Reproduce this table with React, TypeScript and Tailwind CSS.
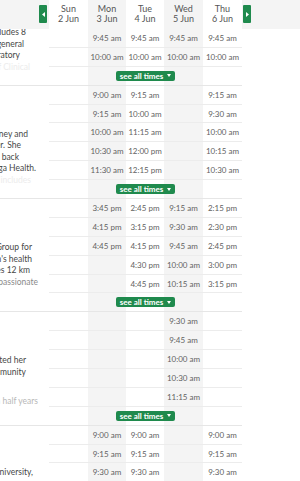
import React from "react";

type Day = { name: string; date: string; width: string; shade: boolean };

const DAYS: Day[] = [
  { name: "Sun", date: "2 Jun", width: "w-[39px]", shade: false },
  { name: "Mon", date: "3 Jun", width: "w-[38px]", shade: true },
  { name: "Tue", date: "4 Jun", width: "w-[38px]", shade: false },
  { name: "Wed", date: "5 Jun", width: "w-[39px]", shade: true },
  { name: "Thu", date: "6 Jun", width: "w-[39px]", shade: false },
];

interface BioLine {
  text: string;
  pad: string;
  tone?: string;
  gap?: string;
}

interface Section {
  id: string;
  top: string;
  bio: BioLine[];
  rows: string[][];
}

const SECTIONS: Section[] = [
  {
    id: "s1",
    top: "-mt-[2px]",
    bio: [
      { text: "includes 8", pad: "pr-[23px]" },
      { text: "general", pad: "pr-[25px]" },
      { text: "laboratory", pad: "pr-[29px]" },
      { text: "of Clinical", pad: "pr-[19px]", tone: "text-[#ececec]" },
    ],
    rows: [
      ["", "9:45 am", "9:45 am", "9:45 am", "9:45 am"],
      ["", "10:00 am", "10:00 am", "10:00 am", "10:00 am"],
    ],
  },
  {
    id: "s2",
    top: "pt-[43px]",
    bio: [
      { text: "Sydney and", pad: "pr-[21px]" },
      { text: "practitioner. She", pad: "pr-[28px]" },
      { text: "travel back", pad: "pr-[30px]" },
      { text: "Omega Health.", pad: "pr-[13px]" },
      { text: "and includes", pad: "pr-[18px]", tone: "text-[#ececec]" },
    ],
    rows: [
      ["", "9:00 am", "9:15 am", "", "9:15 am"],
      ["", "9:15 am", "10:00 am", "", "9:30 am"],
      ["", "10:00 am", "11:15 am", "", "10:00 am"],
      ["", "10:30 am", "12:00 pm", "", "10:15 am"],
      ["", "11:30 am", "12:15 pm", "", "10:30 am"],
    ],
  },
  {
    id: "s3",
    top: "pt-[43px]",
    bio: [
      { text: "Group for", pad: "pr-[17px]" },
      { text: "women's health", pad: "pr-[17px]" },
      { text: "completes 12 km", pad: "pr-[19px]" },
      { text: "is passionate", pad: "pr-[11px]", tone: "text-[#8a8a8a]" },
    ],
    rows: [
      ["", "3:45 pm", "2:45 pm", "9:15 am", "2:15 pm"],
      ["", "4:15 pm", "3:15 pm", "9:30 am", "2:30 pm"],
      ["", "4:45 pm", "4:15 pm", "9:45 am", "2:45 pm"],
      ["", "", "4:30 pm", "10:00 am", "3:00 pm"],
      ["", "", "4:45 pm", "10:15 am", "3:15 pm"],
    ],
  },
  {
    id: "s4",
    top: "pt-[43px]",
    bio: [
      { text: "completed her", pad: "pr-[23px]" },
      { text: "community", pad: "pr-[23px]" },
      { text: "and a half years", pad: "pr-[11px]", tone: "text-[#b8b8b8]", gap: "mt-[17.5px]" },
    ],
    rows: [
      ["", "", "", "9:30 am", ""],
      ["", "", "", "9:45 am", ""],
      ["", "", "", "10:00 am", ""],
      ["", "", "", "10:30 am", ""],
      ["", "", "", "11:15 am", ""],
    ],
  },
  {
    id: "s5",
    top: "pt-[41px]",
    bio: [{ text: "University,", pad: "pr-[16px]" }],
    rows: [
      ["", "9:00 am", "9:00 am", "", "9:00 am"],
      ["", "9:15 am", "9:15 am", "", "9:15 am"],
      ["", "9:30 am", "9:30 am", "", "9:30 am"],
    ],
  },
];

function ArrowButton({ dir }: { dir: "left" | "right" }) {
  return (
    <button className="flex items-center justify-center w-[8px] h-[18px] rounded-[1px] bg-[#1f8a4d]">
      <svg width="3" height="5" viewBox="0 0 3 5">
        {dir === "left" ? (
          <polygon points="3,0 3,5 0,2.5" fill="#fff" />
        ) : (
          <polygon points="0,0 0,5 3,2.5" fill="#fff" />
        )}
      </svg>
    </button>
  );
}

function TimeRow({ times }: { times: string[] }) {
  return (
    <div className="flex h-[18.9px] border-b border-[#ececec]">
      {DAYS.map((day, i) => (
        <div
          key={day.name}
          className={`${day.width} ${day.shade ? "bg-[#f4f4f4]" : ""} flex items-center justify-center text-[8px] text-[#626262]`}
        >
          {times[i]}
        </div>
      ))}
    </div>
  );
}

function SeeAllRow() {
  return (
    <div className="grid grid-cols-[39px_38px_38px_39px_39px] h-[17.9px]">
      {DAYS.map((day, i) => (
        <div
          key={day.name}
          className={`row-start-1 ${day.shade ? "bg-[#f4f4f4]" : ""}`}
          style={{ gridColumnStart: i + 1 }}
        />
      ))}
      <div className="row-start-1 col-start-1 col-span-5 flex items-center justify-center">
        <button className="flex items-center gap-[4px] h-[10px] px-[4px] rounded-[2px] bg-[#1f8a4d] text-white text-[8px] font-bold leading-[10px]">
          see all times
          <svg width="4" height="3" viewBox="0 0 4 3">
            <polygon points="0,0 4,0 2,3" fill="#fff" />
          </svg>
        </button>
      </div>
    </div>
  );
}

function SectionBlock({ section }: { section: Section }) {
  return (
    <div className="flex w-[242px] border-b border-[#e6e6e6]">
      <div className="w-[49px] shrink-0 overflow-hidden">
        <div className={section.top}>
          {section.bio.map((line, idx) => (
            <div
              key={idx}
              className={`flex justify-end h-[11.5px] leading-[11.5px] text-[8.5px] ${line.pad} ${line.gap ?? ""} ${line.tone ?? "text-[#474747]"}`}
            >
              <span className="whitespace-nowrap">{line.text}</span>
            </div>
          ))}
        </div>
      </div>
      <div className="w-[193px] shrink-0">
        {section.rows.map((times, idx) => (
          <TimeRow key={idx} times={times} />
        ))}
        <SeeAllRow />
      </div>
    </div>
  );
}

export default function App() {
  return (
    <div
      className="w-[300px] h-[481px] overflow-hidden bg-white"
      style={{ fontFamily: "Lato, 'Liberation Sans', sans-serif" }}
    >
      <div className="flex h-[29px]">
        <div className="w-[49px] shrink-0 bg-[#f4f4f4] flex justify-end pr-[2px] pt-[5px]">
          <ArrowButton dir="left" />
        </div>
        {DAYS.map((day) => (
          <div
            key={day.name}
            className={`${day.width} shrink-0 ${day.shade ? "bg-[#f4f4f4]" : "bg-white"} flex flex-col items-center pt-[4px] text-[9px] leading-[10px] text-[#555]`}
          >
            <span>{day.name}</span>
            <span>{day.date}</span>
          </div>
        ))}
        <div className="flex-1 bg-[#f4f4f4] pl-[1px] pt-[5px]">
          <ArrowButton dir="right" />
        </div>
      </div>
      {SECTIONS.map((section) => (
        <SectionBlock key={section.id} section={section} />
      ))}
    </div>
  );
}
